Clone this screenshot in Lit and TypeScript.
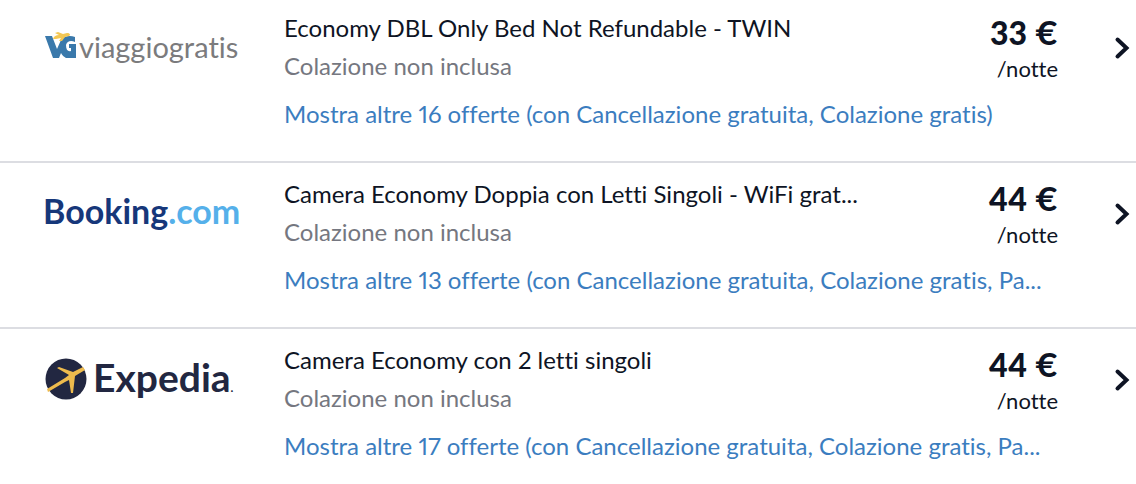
import { LitElement, html, css, svg } from "lit";
import { customElement, property } from "lit/decorators.js";

type Provider = "viaggiogratis" | "booking" | "expedia";

interface Offer {
  provider: Provider;
  room: string;
  price: string;
  more: string;
  perks: string;
}

const OFFERS: Offer[] = [
  {
    provider: "viaggiogratis",
    room: "Economy DBL Only Bed Not Refundable - TWIN",
    price: "33 €",
    more: "Mostra altre 16 offerte",
    perks: "(con Cancellazione gratuita, Colazione gratis)",
  },
  {
    provider: "booking",
    room: "Camera Economy Doppia con Letti Singoli - WiFi grat...",
    price: "44 €",
    more: "Mostra altre 13 offerte",
    perks: "(con Cancellazione gratuita, Colazione gratis, Pa...",
  },
  {
    provider: "expedia",
    room: "Camera Economy con 2 letti singoli",
    price: "44 €",
    more: "Mostra altre 17 offerte",
    perks: "(con Cancellazione gratuita, Colazione gratis, Pa...",
  },
];

const LOGOS = {
  viaggiogratis: svg`
    <path fill="#3a79ab" d="M0 12 L7 12 L12 25 L16 16 C19 12 25 11 30 13 L30 18 C26 16 22 17 21 21 C21 26 23 28 26 27 L26 24 L24 24 L24 20 L31 20 L31 34 L21 34 C19 33 17 31 16 29 L14 34 L8 34 Z"/>
    <path fill="#f3c754" d="M8 15 C9 12 11 11 14 11 L10 9 L13 8 L18 10 L22 9 C25 9 26 11 24 12 L20 13 L17 17 L14 17 L16 14 L11 15 Z"/>
    <text class="viaggio" x="34" y="34">viaggiogratis</text>`,
  booking: svg`
    <text class="booking" x="-2" y="34">Booking<tspan class="dotcom">.com</tspan></text>`,
  expedia: svg`
    <circle cx="21" cy="23" r="20.5" fill="#222741"/>
    <path fill="#eebb4d" d="M2 33 L20 22 L24 19 L12 12 L14 11 L28 16 L38 11 L40 14 L30 20 L28 37 L26 37 L24 24 L20 26 L3 36 Z"/>
    <text class="expedia" x="48" y="36">Expedia<tspan class="mark">.</tspan></text>`,
};

const LOGO_NAMES: Record<Provider, string> = {
  viaggiogratis: "Viaggiogratis",
  booking: "Booking.com",
  expedia: "Expedia",
};

@customElement("provider-logo")
class ProviderLogo extends LitElement {
  @property() provider: Provider = "booking";

  static styles = css`
    :host { display: block; }
    .logo { display: block; width: 100%; height: auto; overflow: visible; }
    .logo text { font-family: "Lato", sans-serif; }
    .viaggio { font-size: 29px; fill: #7b7b7d; }
    .booking { font-size: 34px; font-weight: 700; fill: #16377a; }
    .dotcom { fill: #55b0ea; }
    .expedia { font-size: 39px; font-weight: 700; fill: #222741; }
    .mark { font-size: 12px; }
  `;

  render() {
    return html`<svg class="logo" viewBox="0 0 192 48" role="img" aria-label=${LOGO_NAMES[this.provider]}>
      ${LOGOS[this.provider]}
    </svg>`;
  }
}

@customElement("offer-row")
class OfferRow extends LitElement {
  @property({ attribute: false }) offer!: Offer;

  static styles = css`
    :host { display: block; }
    .row {
      display: grid;
      grid-template-columns: 192px minmax(0, 1fr) 16px;
      padding: 12px 6px 28px 45px;
    }
    .logo { margin-top: 15px; }
    .body {
      display: grid;
      grid-template-columns: minmax(0, 1fr) auto;
      padding: 0 56px 0 47px;
    }
    .room, .meal { line-height: 38px; white-space: nowrap; }
    .meal { color: #757780; }
    .price { text-align: right; }
    .amount { font-size: 32px; font-weight: 900; line-height: 48px; }
    .night { font-size: 22px; line-height: 24px; }
    .more {
      grid-column: 1 / -1;
      margin-top: 10px;
      line-height: 38px;
      color: #3b7dbf;
      text-decoration: none;
      white-space: nowrap;
    }
    .go {
      align-self: start;
      margin-top: 25px;
      padding: 0;
      border: 0;
      background: none;
      color: inherit;
      cursor: pointer;
    }
    .chevron { display: block; width: 16px; height: 28px; }
  `;

  render() {
    const o = this.offer;
    return html`
      <div class="row">
        <provider-logo class="logo" .provider=${o.provider}></provider-logo>
        <div class="body">
          <div>
            <div class="room">${o.room}</div>
            <div class="meal">Colazione non inclusa</div>
          </div>
          <div class="price">
            <div class="amount">${o.price}</div>
            <div class="night">/notte</div>
          </div>
          <a class="more" href="#">${o.more} ${o.perks}</a>
        </div>
        <button class="go" aria-label="Vai all'offerta">
          <svg class="chevron" viewBox="0 0 16 28" aria-hidden="true">
            <path d="M3.500 5.500 L12.500 14 L3.500 22.500" fill="none" stroke="currentColor" stroke-width="4" stroke-linecap="round" stroke-linejoin="miter"/>
          </svg>
        </button>
      </div>
    `;
  }
}

@customElement("app-root")
class AppRoot extends LitElement {
  static styles = css`
    :host {
      display: block;
      overflow: hidden;
      background: #fff;
      color: #0e1424;
      font: 400 24px "Lato", sans-serif;
      font-variant-ligatures: none;
      font-variant-numeric: proportional-nums;
    }
    .offers { margin: -3px 0 0; padding: 0; list-style: none; }
    .item + .item { border-top: 2px solid #dcdde2; }
  `;

  render() {
    return html`
      <ul class="offers">
        ${OFFERS.map((offer) => html`<li class="item"><offer-row .offer=${offer}></offer-row></li>`)}
      </ul>
    `;
  }
}
